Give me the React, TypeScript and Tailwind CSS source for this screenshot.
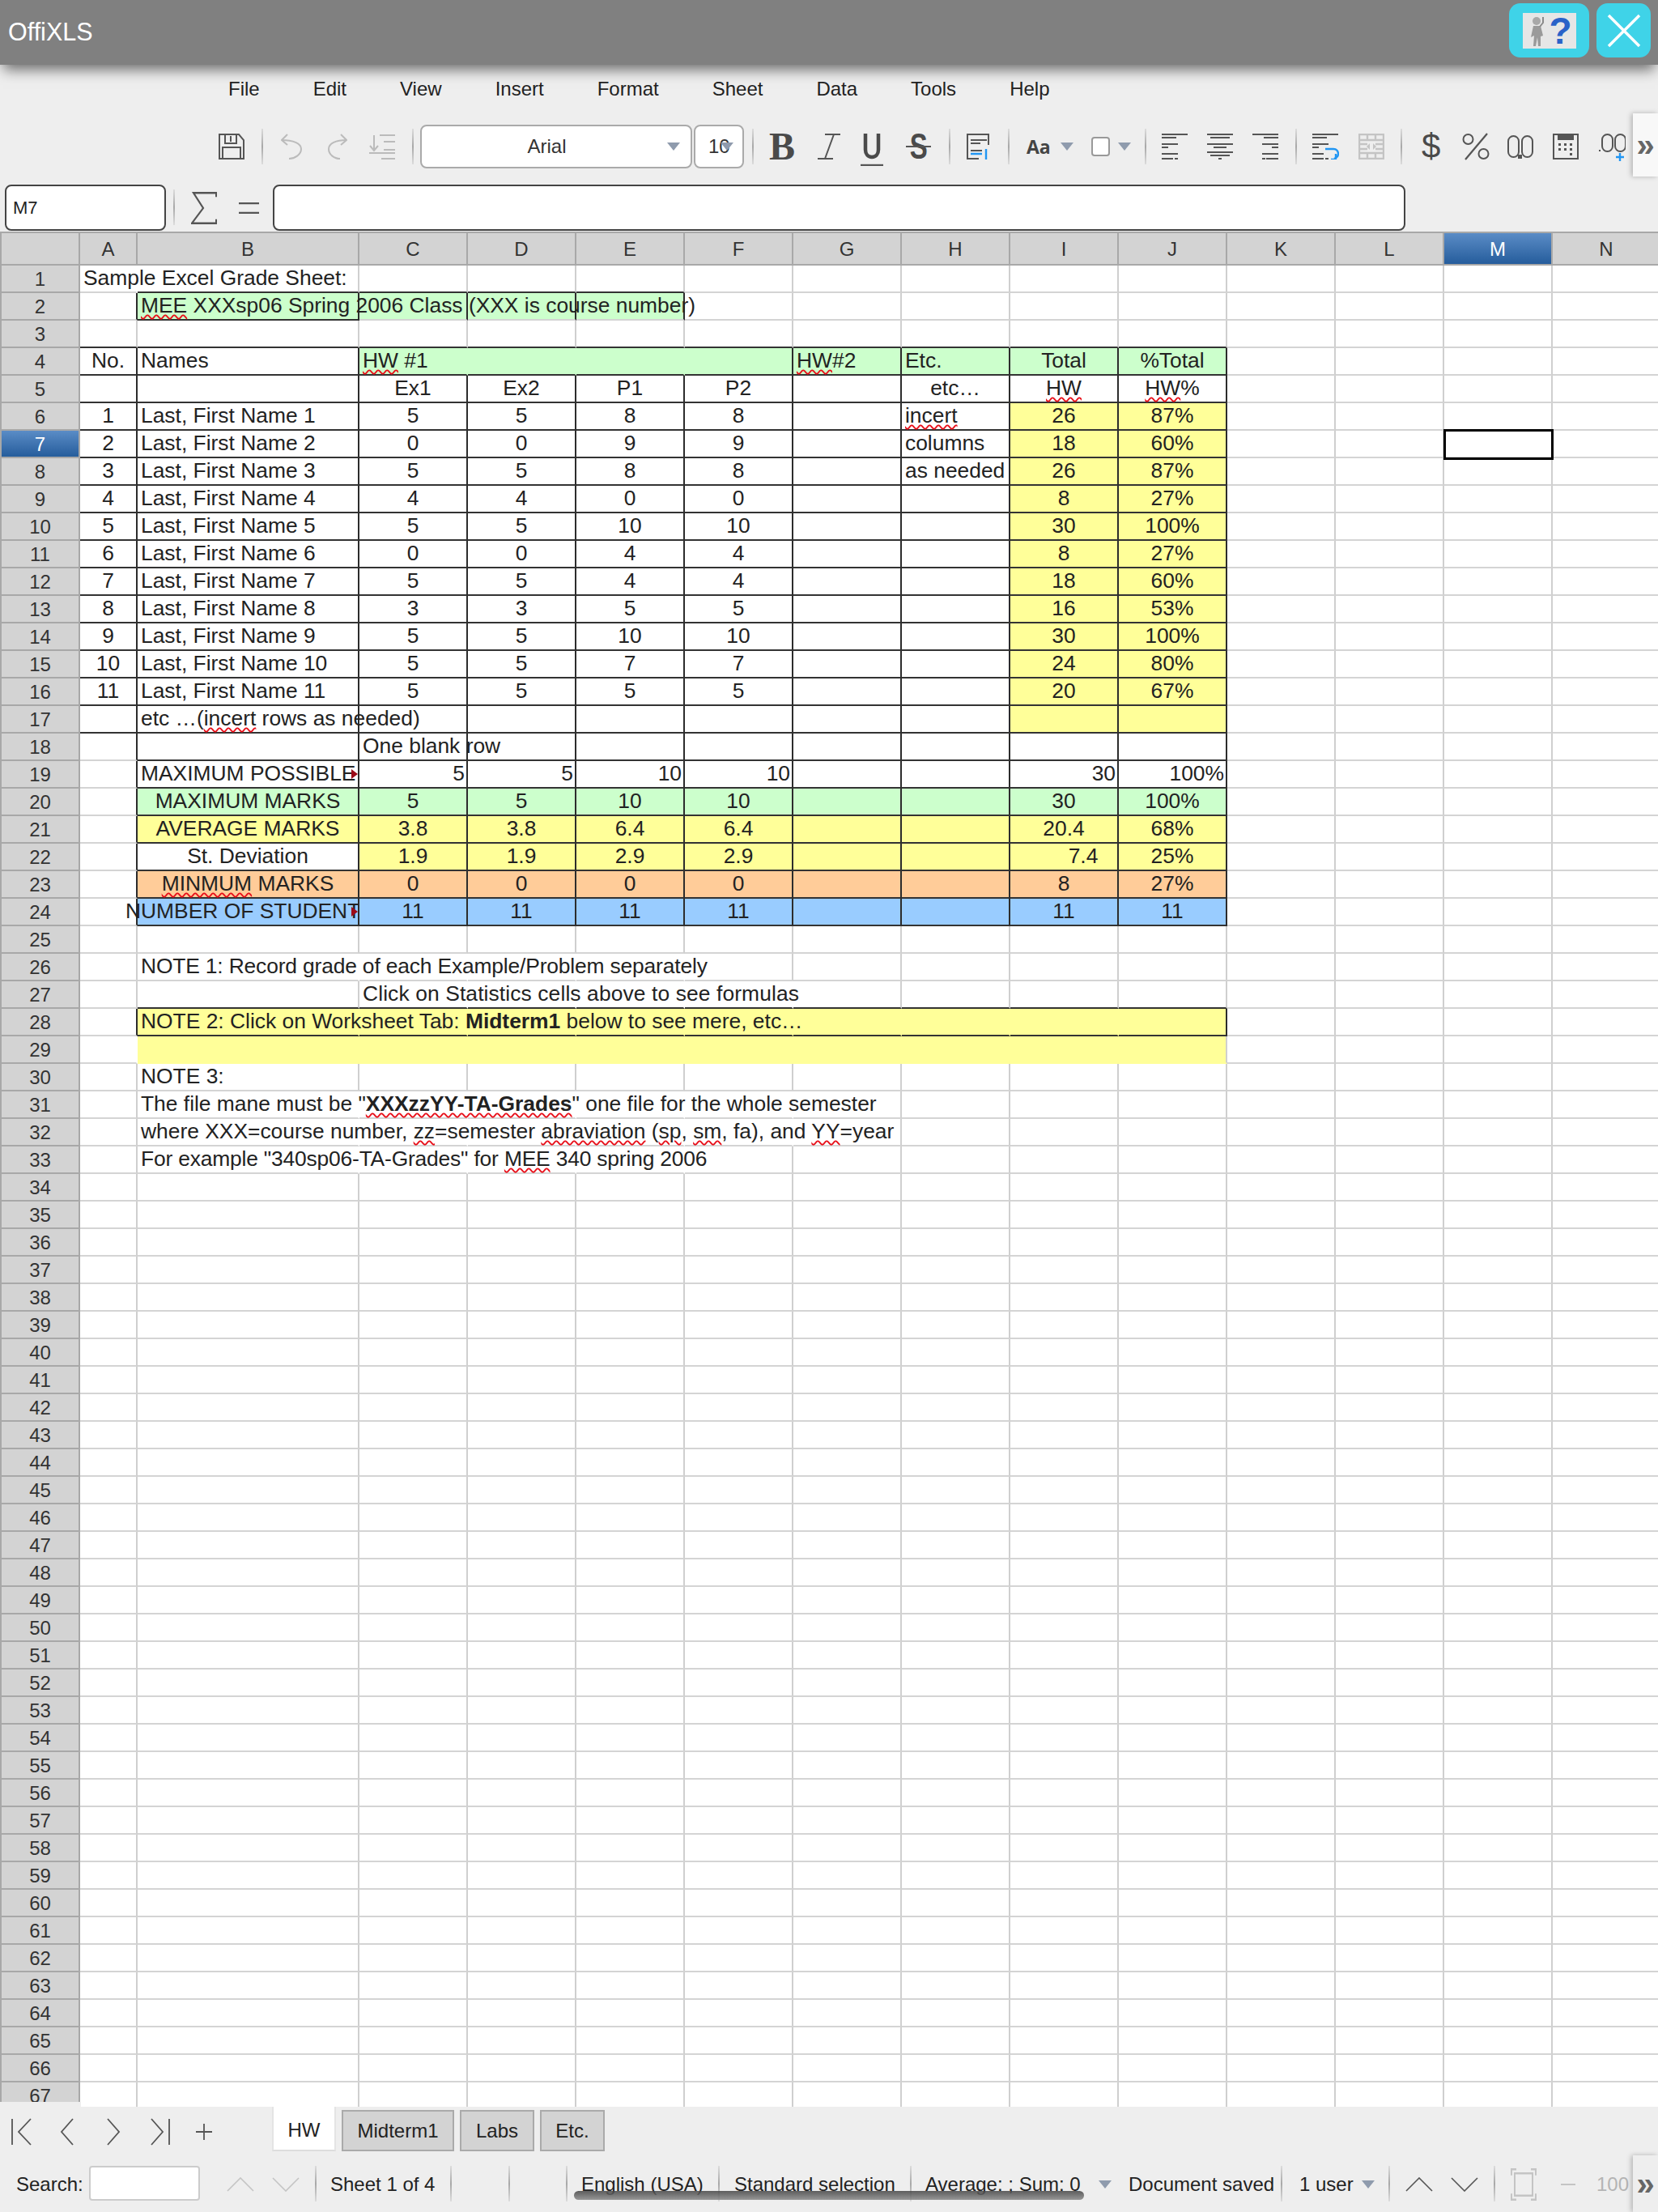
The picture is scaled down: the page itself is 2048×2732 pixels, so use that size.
import React from 'react';
import clsx from 'clsx';

const GREEN = 'bg-[#ccffcc]';
const YELLOW = 'bg-[#ffff99]';
const ORANGE = 'bg-[#ffcc99]';
const BLUE = 'bg-[#99ccff]';

const colNames = ['A', 'B', 'C', 'D', 'E', 'F', 'G', 'H', 'I', 'J', 'K', 'L', 'M', 'N'];
const colWidths = ['w-[71px]', 'w-[274px]', 'w-[134px]', 'w-[134px]', 'w-[134px]', 'w-[134px]', 'w-[134px]', 'w-[134px]', 'w-[134px]', 'w-[134px]', 'w-[134px]', 'w-[134px]', 'w-[134px]', 'w-[134px]'];

type Cell = { t?: React.ReactNode; a?: 'c' | 'r' | 'i'; f?: string };

function Sq({ children }: { children: React.ReactNode }) {
  return <span className="underline decoration-wavy decoration-[#e8101a] decoration-2 underline-offset-[2px]">{children}</span>;
}

const c = (t: React.ReactNode, f?: string): Cell => ({ t, a: 'c', f });
const l = (t?: React.ReactNode, f?: string): Cell => ({ t, f });
const r = (t: React.ReactNode, f?: string): Cell => ({ t, a: 'r', f });

const students = [
  [5, 5, 8, 8, 26, '87%'],
  [0, 0, 9, 9, 18, '60%'],
  [5, 5, 8, 8, 26, '87%'],
  [4, 4, 0, 0, 8, '27%'],
  [5, 5, 10, 10, 30, '100%'],
  [0, 0, 4, 4, 8, '27%'],
  [5, 5, 4, 4, 18, '60%'],
  [3, 3, 5, 5, 16, '53%'],
  [5, 5, 10, 10, 30, '100%'],
  [5, 5, 7, 7, 24, '80%'],
  [5, 5, 5, 5, 20, '67%'],
];
const etcNotes: React.ReactNode[] = [<Sq>incert</Sq>, 'columns', 'as needed'];

function statRow(label: React.ReactNode, vals: (string | number)[], f: string, labelFill?: string): Cell[] {
  return [
    l(),
    c(label, labelFill ?? f),
    c(vals[0], f),
    c(vals[1], f),
    c(vals[2], f),
    c(vals[3], f),
    l(undefined, f),
    l(undefined, f),
    c(vals[4], f),
    c(vals[5], f),
  ];
}

const rows: Record<number, Cell[]> = {
  1: [l('Sample Excel Grade Sheet:')],
  2: [l(), l(<><Sq>MEE</Sq> XXXsp06 Spring 2006 Class (XXX is course number)</>, GREEN), l(undefined, GREEN), l(undefined, GREEN), l(undefined, GREEN)],
  4: [
    c('No.'), l('Names'), l(<><Sq>HW</Sq> #1</>, GREEN), l(undefined, GREEN), l(undefined, GREEN), l(undefined, GREEN),
    l(<><Sq>HW</Sq>#2</>, GREEN), l('Etc.', GREEN), c('Total', GREEN), c('%Total', GREEN),
  ],
  5: [l(), l(), c('Ex1'), c('Ex2'), c('P1'), c('P2'), l(), c('etc…'), c(<Sq>HW</Sq>), c(<><Sq>HW</Sq>%</>)],
  17: [l(), l(<>etc …(<Sq>incert</Sq> rows as needed)</>), l(), l(), l(), l(), l(), l(), l(undefined, YELLOW), l(undefined, YELLOW)],
  18: [l(), l(), l('One blank row')],
  19: [l(), { t: 'MAXIMUM POSSIBLE', a: 'i' }, r(5), r(5), r(10), r(10), l(), l(), r(30), r('100%')],
  20: statRow('MAXIMUM MARKS', [5, 5, 10, 10, 30, '100%'], GREEN),
  21: statRow('AVERAGE MARKS', [3.8, 3.8, 6.4, 6.4, 20.4, '68%'], YELLOW),
  22: statRow('St. Deviation', [1.9, 1.9, 2.9, 2.9, 7.4, '25%'], YELLOW, 'bg-white'),
  23: statRow(<><Sq>MINMUM</Sq> MARKS</>, [0, 0, 0, 0, 8, '27%'], ORANGE),
  24: statRow('', [11, 11, 11, 11, 11, 11], BLUE),
  26: [l(), l(<span className="tracking-[-0.16px]">NOTE 1: Record grade of each Example/Problem separately</span>)],
  27: [l(), l(), l(<span className="tracking-[0.11px]">Click on Statistics cells above to see formulas</span>)],
  28: [
    l(), l(<>NOTE 2: Click on Worksheet Tab: <b>Midterm1</b> below to see mere, etc…</>, YELLOW),
    ...Array.from({ length: 8 }, () => l(undefined, YELLOW)),
  ],
  29: [l(), ...Array.from({ length: 9 }, () => l(undefined, YELLOW))],
  30: [l(), l('NOTE 3:')],
  31: [l(), l(<>The file mane must be "<b><Sq>XXXzzYY-TA-Grades</Sq></b>" one file for the whole semester</>)],
  32: [l(), l(<>where XXX=course number, <Sq>zz</Sq>=semester <Sq>abraviation</Sq> (<Sq>sp</Sq>, <Sq>sm</Sq>, fa), and <Sq>YY</Sq>=year</>)],
  33: [l(), l(<span className="tracking-[-0.18px]">For example "340sp06-TA-Grades" for <Sq>MEE</Sq> 340 spring 2006</span>)],
};
students.forEach((s, i) => {
  const n = i + 6;
  rows[n] = [c(i + 1), l(`Last, First Name ${i + 1}`), c(s[0]), c(s[1]), c(s[2]), c(s[3]), l(), l(etcNotes[i]), c(s[4], YELLOW), c(s[5], YELLOW)];
});
rows[24][1] = { t: 'NUMBER OF STUDENTS', a: 'i', f: BLUE };
rows[22][8] = { t: <span className="pl-[48px]">7.4</span>, a: 'c', f: YELLOW };

const inBox = (ro: number, co: number) =>
  (ro >= 4 && ro <= 17 && co >= 0 && co <= 9) || (ro >= 18 && ro <= 24 && co >= 1 && co <= 9) || (ro === 28 && co >= 1 && co <= 9);

// merged cells: no line between them at all
function mergedRight(ro: number, co: number) {
  return (ro === 4 && co >= 2 && co <= 4) || (ro === 28 && co >= 1 && co <= 8);
}

function darkRight(ro: number, co: number) {
  if (mergedRight(ro, co)) return false;
  if (ro === 2 && co >= 0 && co <= 4) return true;
  return inBox(ro, co) || inBox(ro, co + 1);
}

function darkBottom(ro: number, co: number) {
  if (ro === 1 && co >= 1 && co <= 4) return true;
  if (ro === 2 && co === 1) return true;
  return inBox(ro, co) || inBox(ro + 1, co);
}

// long text runs over the next cells and takes their grid line away
function hideRight(ro: number, co: number) {
  if (mergedRight(ro, co)) return true;
  if (ro === 1) return co === 0;
  if (ro === 26 || ro === 33) return co >= 1 && co <= 4;
  if (ro === 27) return co >= 2 && co <= 5;
  if (ro === 29) return co >= 0 && co <= 8;
  if (ro === 31 || ro === 32) return co >= 1 && co <= 5;
  return false;
}

function Clipped({ text, shift }: { text: string; shift: boolean }) {
  return (
    <>
      <div className={clsx('relative z-10 w-full whitespace-nowrap [clip-path:inset(-6px_0_-6px_-40px)]', !shift && 'pl-[4px]')}>
        <span className={clsx('inline-block', shift && '-ml-[15px]')}>{text}</span>
      </div>
      <div className="absolute right-[0px] top-[10px] z-20 h-0 w-0 border-y-[6px] border-l-[8px] border-y-transparent border-l-[#9c0a18]" />
    </>
  );
}

function GridCell({ ro, co }: { ro: number; co: number }) {
  const cell: Cell = rows[ro]?.[co] ?? {};
  const selected = ro === 7 && co === 12;
  const right = darkRight(ro, co) ? 'border-r-[#2c2c2c]' : hideRight(ro, co) ? (cell.f ? 'border-r-transparent' : 'border-r-white') : 'border-r-[#cfcfcf]';
  const bottom = darkBottom(ro, co) ? 'border-b-[#333333]' : ro === 29 && co >= 1 && co <= 9 ? 'border-b-[#ffff99]' : 'border-b-[#d4d4d4]';
  return (
    <div
      className={clsx(
        'relative flex h-[34px] shrink-0 items-center border-r-2 border-b-2 text-[26.4px] text-[#222] [background-clip:border-box]',
        colWidths[co],
        right,
        bottom,
        cell.f,
        cell.a === 'c' && 'justify-center',
        cell.a === 'r' && 'justify-end pr-[2px]',
        !cell.a && 'pl-[4px]',
      )}
    >
      {cell.a === 'i' ? (
        <Clipped text={String(cell.t)} shift={ro === 24} />
      ) : (
        cell.t !== undefined && <span className="relative z-10 whitespace-nowrap">{cell.t}</span>
      )}
      {selected && <div className="absolute -top-[2px] -left-[1px] z-20 h-[38px] w-[136px] border-[3px] border-black" />}
    </div>
  );
}

function Sheet() {
  return (
    <div className="relative min-h-0 flex-1 overflow-hidden border-t-2 border-t-[#a8a8a8] bg-white font-['Liberation_Sans',sans-serif]">
      <div className="flex h-[40px] w-[2100px]">
        <div className="h-full w-[99px] shrink-0 border-r-2 border-b-2 border-l-2 border-[#a8a8a8] bg-[#d3d3d3]" />
        {colNames.map((n, i) => (
          <div
            key={n}
            className={clsx(
              'flex h-full shrink-0 items-center justify-center border-r-2 border-b-2 border-[#a8a8a8] pt-[2px] text-[24px]',
              colWidths[i],
              i === 12 ? 'bg-gradient-to-b from-[#5a8cc6] to-[#255d9c] text-white' : 'bg-[#d3d3d3] text-[#333]',
            )}
          >
            {n}
          </div>
        ))}
      </div>
      {Array.from({ length: 67 }, (_, i) => i + 1).map((ro) => (
        <div key={ro} className="flex h-[34px] w-[2100px]">
          <div
            className={clsx(
              'flex h-full w-[99px] shrink-0 items-center justify-center border-r-2 border-b-2 border-l-2 border-[#a8a8a8] pt-[2px] text-[24px]',
              ro === 7 ? 'bg-gradient-to-b from-[#5a8cc6] to-[#255d9c] text-white' : 'bg-[#d3d3d3] text-[#333]',
            )}
          >
            {ro}
          </div>
          {colNames.map((n, co) => (
            <GridCell key={n} ro={ro} co={co} />
          ))}
        </div>
      ))}
      <div className="absolute bottom-0 left-0 z-30 h-[6px] w-[100px] bg-[#eeeeee]" />
    </div>
  );
}

function Sep({ className }: { className?: string }) {
  return <div className={clsx('h-[44px] w-[2px] shrink-0 bg-gradient-to-b from-[#dcdcdc] via-[#a8a8a8] to-[#dcdcdc]', className)} />;
}

function Arrow({ className }: { className?: string }) {
  return (
    <svg width="16" height="10" viewBox="0 0 16 10" className={clsx('shrink-0', className)}>
      <path d="M0 0h16L8 10z" fill="#8f9bad" />
    </svg>
  );
}

function Chevron({ dir, color = '#555', className }: { dir: 'up' | 'down'; color?: string; className?: string }) {
  return (
    <svg width="34" height="18" viewBox="0 0 34 18" fill="none" stroke={color} strokeWidth="1.6" className={clsx('shrink-0', className)}>
      <path d={dir === 'up' ? 'M1 17L17 1l16 16' : 'M1 1l16 16L33 1'} />
    </svg>
  );
}

const alignPaths = {
  left: 'M0 1h32M0 5h18M0 13h20M0 17h8M0 25h20M0 31h14M16 31h4',
  center: 'M0 1h32M4 5h24M0 13h32M8 17h16M0 23h32M4 27h24M14 31h4',
  right: 'M0 1h32M14 5h18M12 13h20M24 17h8M12 25h20M12 31h4M17 31h15',
};

function AlignIcon({ kind, className }: { kind: 'left' | 'center' | 'right'; className?: string }) {
  return (
    <svg width="32" height="32" viewBox="0 0 32 32" fill="none" stroke="#555" strokeWidth="2" className={clsx('shrink-0', className)}>
      <path d={alignPaths[kind]} />
    </svg>
  );
}

function Toolbar() {
  return (
    <div className="flex h-[82px] items-center pl-[270px] text-[#444]">
      <svg width="32" height="32" viewBox="0 0 32 32" fill="none" stroke="#555" strokeWidth="2" className="shrink-0">
        <path d="M1 1h24l6 7v23H1zM8 1v11h14V1M15 3v7M5 17h22v14H5z" />
      </svg>
      <Sep className="ml-[21px]" />
      <svg width="26" height="32" viewBox="0 0 26 32" fill="none" stroke="#bbb" strokeWidth="2" className="ml-[22px] shrink-0">
        <path d="M8 1L1 8l7 6M1 8c14 0 24 4 24 11 0 7-8 12-15 12" />
      </svg>
      <svg width="24" height="32" viewBox="0 0 24 32" fill="none" stroke="#bbb" strokeWidth="2" className="ml-[32px] shrink-0">
        <path d="M16 1l7 7-7 6M23 8C10 8 1 12 1 19c0 7 7 12 14 12" />
      </svg>
      <svg width="33" height="32" viewBox="0 0 33 32" fill="none" stroke="#bbb" strokeWidth="2" className="ml-[26px] shrink-0">
        <path d="M14 2h19M19 10h14M19 20h14M1 24h32M16 31h17M7 2v18M2 15l5 6 5-6" />
      </svg>
      <Sep className="ml-[21px]" />
      <div className="ml-[8px] flex h-[54px] w-[336px] shrink-0 items-center rounded-lg border-2 border-[#aaa] bg-white text-[24px] text-[#333]">
        <span className="flex-1 pl-[6px] text-center">Arial</span>
        <Arrow className="mr-[13px]" />
      </div>
      <div className="relative ml-[2px] flex h-[54px] w-[62px] shrink-0 items-center rounded-lg border-2 border-[#aaa] bg-white pl-[16px] text-[24px] text-[#333]">
        10
        <Arrow className="absolute right-[11px] top-[20px]" />
      </div>
      <Sep className="ml-[10px]" />
      <span className="ml-[19px] w-[32px] shrink-0 font-['Liberation_Serif',serif] text-[48px] leading-none font-bold text-[#4a4a4a]">B</span>
      <svg width="28" height="32" viewBox="0 0 28 32" fill="none" stroke="#555" strokeWidth="2" className="ml-[28px] shrink-0">
        <path d="M9 1h19M0 31h19M20 1L9 31" />
      </svg>
      <div className="ml-[25px] w-[29px] shrink-0">
        <svg width="28" height="40" viewBox="0 0 28 40" fill="none" stroke="#4a4a4a" className="mt-[7px]">
          <path d="M6 0v20c0 5 3 9 8 9s8-4 8-9V0" strokeWidth="4.5" />
          <path d="M0 39h28" stroke="#555" strokeWidth="2.4" />
        </svg>
      </div>
      <span className="relative ml-[27px] w-[31px] shrink-0 text-center font-['Liberation_Sans',sans-serif] text-[44px] leading-none font-bold text-[#4a4a4a]">
        <span className="inline-block scale-x-75">S</span>
        <span className="absolute top-[21px] left-0 h-[2px] w-full bg-[#555]" />
      </span>
      <Sep className="ml-[22px]" />
      <svg width="28" height="32" viewBox="0 0 28 32" fill="none" stroke="#555" strokeWidth="2" className="ml-[20px] shrink-0">
        <path d="M27 14V1H1v30h14M5 8h20M5 12h12M5 21h14" />
        <path d="M5 25h14M24 19v13" stroke="#2196f3" strokeWidth="2.4" />
      </svg>
      <Sep className="ml-[23px]" />
      <span className="ml-[21px] w-[30px] shrink-0 font-['Open_Sans',sans-serif] text-[23px] font-bold text-[#444]">Aa</span>
      <Arrow className="ml-[12px]" />
      <div className="ml-[22px] h-[24px] w-[23px] shrink-0 rounded-sm border-2 border-[#999] bg-white" />
      <Arrow className="ml-[10px]" />
      <Sep className="ml-[17px]" />
      <AlignIcon kind="left" className="ml-[19px]" />
      <AlignIcon kind="center" className="ml-[24px]" />
      <AlignIcon kind="right" className="ml-[24px]" />
      <Sep className="ml-[21px]" />
      <svg width="33" height="32" viewBox="0 0 33 32" fill="none" stroke="#555" strokeWidth="2" className="ml-[19px] shrink-0">
        <path d="M0 1h32M0 5h18M0 13h20M0 17h8M0 25h14M0 31h14M16 31h4" />
        <path d="M16 19h10c4 0 6 3 6 6s-2 5-5 6M29 25v7h-6" stroke="#2196f3" strokeWidth="2.4" />
      </svg>
      <svg width="32" height="32" viewBox="0 0 32 32" fill="none" stroke="#c4c4c4" strokeWidth="2.4" className="ml-[24px] shrink-0">
        <path d="M1 1h30v30H1zM1 8h30M1 24h30M1 13h10M21 13h10M1 19h10M21 19h10M11 1v7M21 1v7M11 24v7M21 24v7" />
        <path d="M14 12l-4 4 4 4zM18 12l4 4-4 4z" fill="#c4c4c4" stroke="none" />
      </svg>
      <Sep className="ml-[20px]" />
      <span className="ml-[24px] w-[24px] shrink-0 font-['Liberation_Sans',sans-serif] text-[42px] leading-none text-[#4a4a4a]">$</span>
      <svg width="34" height="34" viewBox="0 0 34 34" fill="none" stroke="#555" strokeWidth="2" className="ml-[26px] shrink-0">
        <circle cx="7.5" cy="8" r="6" />
        <circle cx="26.5" cy="26" r="6" />
        <path d="M31 1L4 33" strokeWidth="2.2" />
      </svg>
      <svg width="32" height="32" viewBox="0 0 32 32" fill="none" stroke="#555" strokeWidth="2" className="ml-[22px] shrink-0">
        <rect x="1" y="3" width="13" height="26" rx="6.5" />
        <rect x="18" y="3" width="13" height="26" rx="6.5" />
        <path d="M14 27h3v3h-3z" fill="#555" />
      </svg>
      <svg width="32" height="32" viewBox="0 0 32 32" fill="none" stroke="#555" strokeWidth="2" className="ml-[24px] shrink-0">
        <path d="M1 1h6v6h18V1h6v30H1z" />
        <path d="M8 0h16v6H8z" fill="#555" stroke="none" />
        <path d="M7 12h3v3H7zM14 12h3v3h-3zM21 12h3v3h-3zM7 18h3v3H7zM14 18h3v3h-3zM21 18h3v3h-3zM21 24h3v3h-3z" fill="#555" stroke="none" />
      </svg>
      <svg width="33" height="40" viewBox="0 0 33 40" fill="none" stroke="#555" strokeWidth="2" className="mt-[8px] ml-[25px] shrink-0">
        <rect x="4" y="1" width="13" height="21" rx="6.5" />
        <rect x="20" y="1" width="13" height="21" rx="6.5" />
        <path d="M0 20h2v2H0z" fill="#555" stroke="none" />
        <path d="M26 24v10M21 29h10" stroke="#2196f3" strokeWidth="2.4" />
      </svg>
    </div>
  );
}

function SheetTabs() {
  return (
    <div className="flex h-[60px] items-start pl-[14px] text-[24px] text-[#222]">
      <svg width="226" height="34" viewBox="0 0 226 34" fill="none" stroke="#555" strokeWidth="1.8" className="mt-[14px] shrink-0">
        <path d="M1 1v32M24 1L9 17l15 16" />
        <path d="M76 1L62 17l14 16" />
        <path d="M119 1l14 16-14 16" />
        <path d="M173 1l14 16-14 16M195 1v32" />
      </svg>
      <svg width="20" height="20" viewBox="0 0 20 20" stroke="#555" strokeWidth="1.8" className="mt-[21px] ml-[2px] shrink-0">
        <path d="M0 10h20M10 0v20" />
      </svg>
      <div className="ml-[74px] flex h-[55px] w-[79px] shrink-0 items-center justify-center border-x-2 border-b-2 border-x-[#e4e4e4] border-b-[#ddd] bg-white pt-[4px]">HW</div>
      <div className="mt-[4px] ml-[7px] flex h-[51px] w-[139px] shrink-0 items-center justify-center border-2 border-[#aaa] bg-[#d3d3d3]">Midterm1</div>
      <div className="mt-[4px] ml-[7px] flex h-[51px] w-[92px] shrink-0 items-center justify-center border-2 border-[#aaa] bg-[#d3d3d3]">Labs</div>
      <div className="mt-[4px] ml-[7px] flex h-[51px] w-[80px] shrink-0 items-center justify-center border-2 border-[#aaa] bg-[#d3d3d3]">Etc.</div>
    </div>
  );
}

function StatusBar() {
  return (
    <div className="flex h-[70px] items-start whitespace-nowrap pt-[13px] pl-[20px] text-[24px] leading-[46px] text-[#222]">
      <span className="w-[82px] shrink-0">Search:</span>
      <div className="ml-[8px] h-[43px] w-[137px] shrink-0 rounded border-2 border-[#ccc] bg-white" />
      <Chevron dir="up" color="#c4c4c4" className="mt-[14px] ml-[33px]" />
      <Chevron dir="down" color="#c4c4c4" className="mt-[14px] ml-[22px]" />
      <Sep className="ml-[19px]" />
      <span className="ml-[17px] w-[129px] shrink-0">Sheet 1 of 4</span>
      <Sep className="ml-[19px]" />
      <Sep className="ml-[70px]" />
      <Sep className="ml-[69px]" />
      <span className="ml-[17px] w-[150px] shrink-0">English (USA)</span>
      <Sep className="ml-[19px]" />
      <span className="ml-[18px] w-[197px] shrink-0">Standard selection</span>
      <Sep className="ml-[20px]" />
      <span className="ml-[17px] w-[192px] shrink-0">Average: ; Sum: 0</span>
      <Arrow className="mt-[18px] ml-[22px]" />
      <span className="ml-[21px] w-[178px] shrink-0">Document saved</span>
      <Sep className="ml-[10px]" />
      <span className="ml-[21px] w-[66px] shrink-0">1 user</span>
      <Arrow className="mt-[18px] ml-[11px]" />
      <Sep className="ml-[17px]" />
      <Chevron dir="up" className="mt-[14px] ml-[19px]" />
      <Chevron dir="down" className="mt-[14px] ml-[22px]" />
      <Sep className="ml-[19px]" />
      <svg width="32" height="32" viewBox="0 0 32 32" fill="none" stroke="#c4c4c4" strokeWidth="2" className="mt-[7px] ml-[19px] shrink-0 scale-y-125">
        <path d="M1 7V1h6M25 1h6v6M1 25v6h6M25 31h6v-6M5 5h22v22H5z" />
      </svg>
      <div className="mt-[22px] ml-[30px] h-[2px] w-[18px] shrink-0 bg-[#c4c4c4]" />
      <span className="ml-[26px] text-[#b4b4b4]">100</span>
    </div>
  );
}

export default function App() {
  return (
    <div className="relative flex h-[2732px] w-[2048px] flex-col overflow-hidden bg-[#eeeeee] font-['Liberation_Sans',sans-serif]">
      <header className="relative z-40 flex h-[80px] shrink-0 items-start justify-between bg-[#808080] pr-[9px] shadow-[0_10px_16px_-4px_rgba(0,0,0,0.55)]">
        <span className="mt-[21px] ml-[10px] text-[30.5px] leading-[36px] text-white">OffiXLS</span>
        <div className="mt-[4px] flex gap-[9px]">
          <div className="flex h-[67px] w-[99px] items-center justify-center rounded-[14px] bg-[#3fd3e8]">
            <div className="flex h-[44px] w-[66px] items-center justify-center gap-[2px] bg-[#e6e6e6]">
              <svg width="26" height="42" viewBox="0 0 26 42" className="shrink-0">
                <circle cx="13" cy="9" r="5" fill="#a8a8a8" />
                <path d="M9 15h9l3 12-3 1 0 12h-3l-1-11-2 11H9l1-13-4 2z" fill="#9a9a9a" />
                <path d="M17 16l4-5 0-7" fill="none" stroke="#8a8a8a" strokeWidth="2" />
              </svg>
              <span className="text-[46px] leading-none font-bold text-[#2a62c8]">?</span>
            </div>
          </div>
          <div className="flex h-[67px] w-[67px] items-center justify-center rounded-[14px] bg-[#3fd3e8]">
            <svg width="42" height="42" viewBox="0 0 42 42" stroke="white" strokeWidth="3.5" className="shrink-0">
              <path d="M2 2l38 38M40 2L2 40" />
            </svg>
          </div>
        </div>
      </header>

      <nav className="flex h-[60px] shrink-0 items-center gap-[66px] pl-[282px] text-[24px] text-[#222]">
        {['File', 'Edit', 'View', 'Insert', 'Format', 'Sheet', 'Data', 'Tools', 'Help'].map((m) => (
          <span key={m}>{m}</span>
        ))}
      </nav>

      <Toolbar />

      <div className="flex h-[64px] shrink-0 items-start pt-[6px] pl-[6px]">
        <div className="flex h-[57px] w-[199px] shrink-0 items-center rounded-lg border-2 border-[#444] bg-white pl-[8px] text-[22px] text-[#222]">M7</div>
        <Sep className="mt-[6px] ml-[9px]" />
        <svg width="32" height="32" viewBox="0 0 32 32" fill="none" stroke="#555" strokeWidth="2" className="mt-[13px] ml-[20px] shrink-0 scale-y-125">
          <path d="M31 5V1H3l12 15L1 31h30v-4" />
        </svg>
        <svg width="25" height="14" viewBox="0 0 25 14" stroke="#555" strokeWidth="2.4" className="mt-[22px] ml-[27px] shrink-0">
          <path d="M0 1h25M0 13h25" />
        </svg>
        <div className="ml-[17px] h-[57px] w-[1399px] shrink-0 rounded-lg border-2 border-[#444] bg-white" />
      </div>

      <Sheet />

      <SheetTabs />
      <StatusBar />

      <div className="absolute top-[140px] right-0 z-30 flex h-[78px] w-[31px] items-center justify-center bg-[#f8f8f8] text-[40px] font-bold text-[#666] shadow-[-2px_0_6px_rgba(0,0,0,0.25)]">»</div>
      <div className="absolute right-0 bottom-0 z-30 flex h-[70px] w-[31px] items-center justify-center bg-[#eeeeee] text-[40px] font-bold text-[#666] shadow-[-2px_0_6px_rgba(0,0,0,0.25)]">»</div>
      <div className="absolute top-[2706px] left-[709px] z-30 h-[11px] w-[630px] rounded-full bg-gradient-to-b from-[#444] to-[#888] opacity-85" />
    </div>
  );
}
